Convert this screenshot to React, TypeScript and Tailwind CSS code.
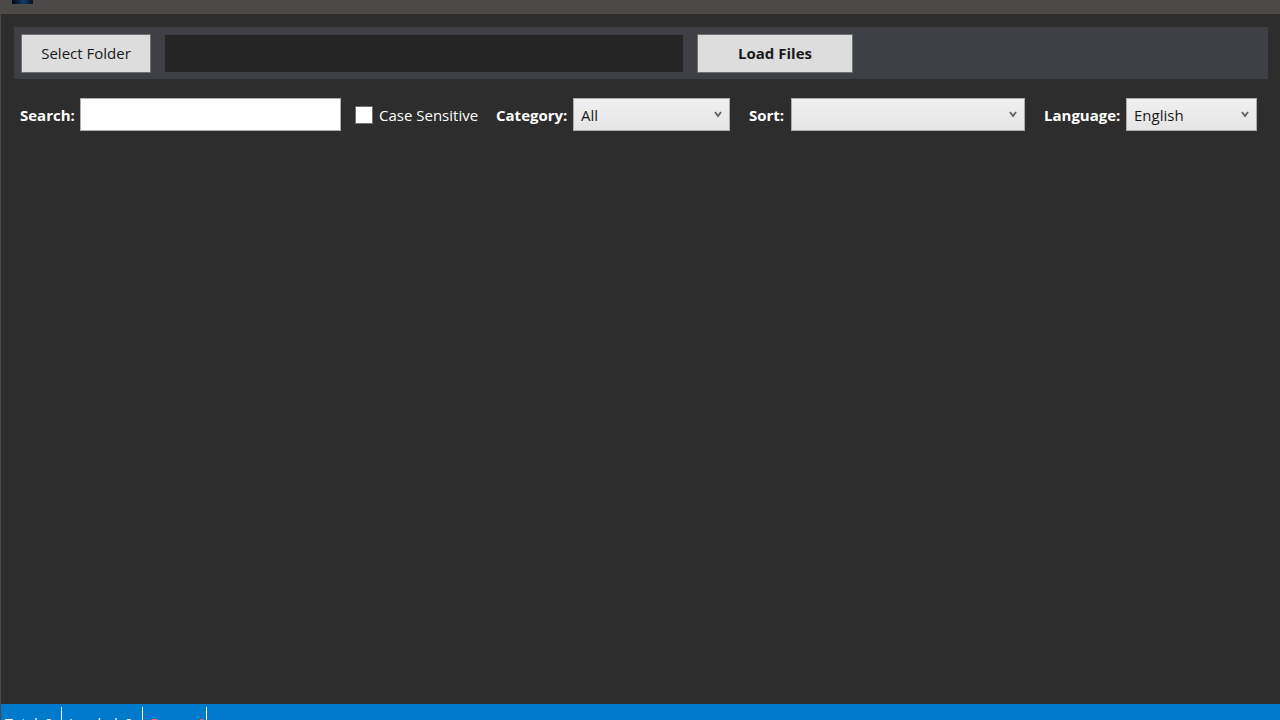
import React, { useState } from "react";

const categories = ["All"];
const languages = ["English"];

const stats = [
  { id: "total", text: "Total: 0", box: "w-[61px] pl-1", color: "text-white" },
  { id: "loaded", text: "Loaded: 0", box: "w-[81px] pl-[7px]", color: "text-white" },
  { id: "errors", text: "Errors: 0", box: "w-16 pl-[7px]", color: "text-[#f0645a]" },
];

type DropdownProps = {
  id: string;
  label: string;
  options: string[];
  labelWidth: string;
  width: string;
};

const Dropdown = ({ id, label, options, labelWidth, width }: DropdownProps) => {
  return (
    <div className="flex items-center">
      <label htmlFor={id} className={`${labelWidth} shrink-0 font-bold whitespace-nowrap`}>
        {label}
      </label>
      <div className={`relative ${width}`}>
        <select
          id={id}
          className="block w-full h-[33px] appearance-none border border-[#acacac] bg-linear-to-b from-[#f0f0f0] to-[#e5e5e5] pl-[7px] pr-6 text-[#1a1a1a] outline-none"
        >
          {options.map((option) => (
            <option key={option}>{option}</option>
          ))}
        </select>
        <svg
          viewBox="0 0 8 7"
          className="pointer-events-none absolute right-2 top-[13px] w-2 h-[7px]"
          fill="none"
          stroke="#606060"
          strokeWidth="1.8"
        >
          <path d="M1 1 L4 5 L7 1" />
        </svg>
      </div>
    </div>
  );
};

const TitleBar = () => {
  return (
    <header className="flex h-[14px] shrink-0 items-end overflow-hidden bg-[#4c4a48] pb-[10px] pl-3">
      <svg viewBox="0 0 21 20" className="w-[21px] h-5 shrink-0">
        <defs>
          <linearGradient id="logo" x1="0" x2="1">
            <stop offset="0" stopColor="#03070f" />
            <stop offset="0.55" stopColor="#173a63" />
            <stop offset="1" stopColor="#07101f" />
          </linearGradient>
        </defs>
        <rect width="21" height="20" fill="url(#logo)" />
      </svg>
    </header>
  );
};

const StatusBar = () => {
  return (
    <footer className="flex h-4 shrink-0 overflow-hidden border-l border-[#4c4a48] bg-[#007acc] pt-[3px]">
      {stats.map((stat) => (
        <span
          key={stat.id}
          className={`${stat.box} ${stat.color} h-8 shrink-0 border-r border-white pt-[7px] text-sm leading-5 whitespace-nowrap`}
        >
          {stat.text}
        </span>
      ))}
    </footer>
  );
};

const App = () => {
  const [search, setSearch] = useState("");
  const [caseSensitive, setCaseSensitive] = useState(false);

  return (
    <div className="flex h-screen flex-col overflow-hidden bg-[#2d2d2d] font-['Open_Sans',sans-serif] text-[15px] leading-5 text-white">
      <TitleBar />
      <main className="flex-1 border-l border-[#4c4a48] pl-[13px] pr-3 pt-[13px]">
        <div className="flex h-[52px] items-center bg-[#3f3f46] px-[7px]">
          <button className="h-[39px] w-[130px] shrink-0 border border-[#707070] bg-[#dddddd] text-[#1a1a1a]">
            Select Folder
          </button>
          <input
            readOnly
            aria-label="Folder path"
            className="ml-3.5 h-[37px] w-[518px] bg-[#252526] px-2 outline-none"
          />
          <button className="ml-3.5 h-[39px] w-[156px] shrink-0 border border-[#707070] bg-[#dddddd] font-bold text-[#1a1a1a]">
            Load Files
          </button>
        </div>
        <div className="mt-[19px] flex items-center gap-x-[19px] pl-[6px]">
          <div className="flex items-center">
            <label htmlFor="search" className="w-[60px] shrink-0 font-bold">
              Search:
            </label>
            <input
              id="search"
              value={search}
              onChange={(e) => setSearch(e.target.value)}
              className="h-[33px] w-[261px] border border-[#abadb3] bg-white px-2 text-black outline-none"
            />
            <label className="ml-3.5 flex items-center gap-[6px] whitespace-nowrap">
              <input
                type="checkbox"
                checked={caseSensitive}
                onChange={(e) => setCaseSensitive(e.target.checked)}
                className="size-[18px] appearance-none border border-[#707070] bg-white checked:bg-[#007acc]"
              />
              <span className="w-[98px]">Case Sensitive</span>
            </label>
          </div>
          <Dropdown id="category" label="Category:" options={categories} labelWidth="w-[77px]" width="w-[157px]" />
          <Dropdown id="sort" label="Sort:" options={[]} labelWidth="w-[42px]" width="w-[234px]" />
          <Dropdown id="language" label="Language:" options={languages} labelWidth="w-[82px]" width="w-[131px]" />
        </div>
      </main>
      <StatusBar />
    </div>
  );
};

export default App;
